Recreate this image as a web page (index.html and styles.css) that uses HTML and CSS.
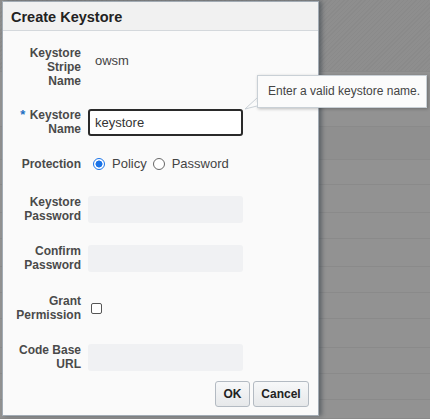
FILE: index.html
```html
<!DOCTYPE html>
<html>
<head>
<meta charset="utf-8">
<link rel="stylesheet" href="styles.css">
</head>
<body>
<div class="backdrop">
  <div class="bg-row hatch" style="height:72px"></div>
  <div class="bg-row" style="height:55px"></div>
  <div class="bg-row dotted" style="height:33px"></div>
  <div class="bg-row" style="height:25px"></div>
  <div class="bg-row" style="height:28px"></div>
  <div class="bg-row" style="height:26px"></div>
  <div class="bg-row" style="height:28px"></div>
  <div class="bg-row" style="height:26px"></div>
  <div class="bg-row" style="height:26px"></div>
  <div class="bg-row" style="height:29px"></div>
  <div class="bg-row" style="height:26px"></div>
  <div class="bg-row" style="height:26px"></div>
  <div class="bg-row" style="height:19px"></div>
</div>

<div class="dialog">
  <div class="dlg-header">Create Keystore</div>
  <div class="dlg-body">
    <div class="row r1">
      <div class="label">Keystore<br>Stripe<br>Name</div>
      <div class="value">owsm</div>
    </div>
    <div class="row r2 center">
      <div class="label"><span class="req">*</span> Keystore<br>Name</div>
      <div class="input active">keystore</div>
    </div>
    <div class="row r3 center">
      <div class="label">Protection</div>
      <div class="radios">
        <span class="radio on"></span><span class="rlabel">Policy</span>
        <span class="radio"></span><span class="rlabel">Password</span>
      </div>
    </div>
    <div class="row r4 center">
      <div class="label">Keystore<br>Password</div>
      <div class="input disabled"></div>
    </div>
    <div class="row r5 center">
      <div class="label">Confirm<br>Password</div>
      <div class="input disabled"></div>
    </div>
    <div class="row r6 center">
      <div class="label">Grant<br>Permission</div>
      <div class="check-wrap"><span class="checkbox"></span></div>
    </div>
    <div class="row r7 center">
      <div class="label">Code Base<br>URL</div>
      <div class="input disabled"></div>
    </div>
    <div class="buttons">
      <button class="btn ok">OK</button>
      <button class="btn cancel">Cancel</button>
    </div>
  </div>
</div>

<div class="tooltip">
  <svg class="tail" width="16" height="14" viewBox="0 0 16 14">
    <path d="M13 0 L13 6 L1 13 L13 10 Z" fill="#fbfbfb"/>
    <path d="M13 2 L1 13 L13 10" fill="none" stroke="#c9d0d6" stroke-width="1"/>
  </svg>
  Enter a valid keystore name.
</div>
</body>
</html>
```

FILE: styles.css
```css
* { box-sizing: border-box; }
html, body {
  margin: 0;
  padding: 0;
  width: 430px;
  height: 419px;
  overflow: hidden;
  background: #8f8f8f;
  font-family: "Liberation Sans", Arial, sans-serif;
}
.backdrop {
  display: flex;
  flex-direction: column;
  width: 430px;
  height: 419px;
}
.bg-row {
  background: #929292;
  border-bottom: 1px solid #8a8a8a;
  flex: none;
}
.bg-row.hatch {
  background: repeating-linear-gradient(135deg, #8a8a8a 0 1px, #8e8e8e 1px 3px);
}
.bg-row.dotted {
  background: #8f8f8f;
}
.dialog {
  position: absolute;
  left: 2px;
  top: 1px;
  width: 317px;
  height: 415px;
  background: #fafafa;
  border: 1px solid #a2abb4;
  box-shadow: 3px 0 4px rgba(40, 50, 60, 0.45);
  display: flex;
  flex-direction: column;
}
.dlg-header {
  height: 29px;
  background: #f1f1f1;
  border-bottom: 1px solid #d4d8dc;
  font-size: 14.5px;
  font-weight: bold;
  color: #222;
  padding: 7px 0 0 8px;
  flex: none;
}
.dlg-body {
  padding-top: 15px;
  display: flex;
  flex-direction: column;
}
.row {
  display: grid;
  grid-template-columns: 78px 1fr;
  column-gap: 7px;
  align-items: start;
}
.row.center { align-items: center; }
.label {
  text-align: right;
  font-size: 12px;
  font-weight: bold;
  line-height: 14px;
  color: #4a4a4a;
}
.req {
  color: #1d6fc2;
  font-size: 13px;
  margin-right: 1px;
}
.value {
  font-size: 13px;
  color: #444;
  line-height: 14px;
  padding: 8px 0 0 7px;
}
.r2 { margin-top: 20px; }
.r3 { margin-top: 20px; }
.r4 { margin-top: 24px; }
.r5 { margin-top: 21px; }
.r6 { margin-top: 22px; }
.r7 { margin-top: 21px; }
.input {
  width: 155px;
  height: 27px;
  border-radius: 3px;
  font-size: 13px;
  color: #333;
  line-height: 23px;
  padding-left: 5px;
}
.input.active {
  background: #fff;
  border: 2px solid #2a2a2a;
}
.input.disabled {
  background: #f0f1f3;
}
.radios {
  display: flex;
  align-items: center;
  padding-left: 5px;
  height: 15px;
}
.radio {
  width: 12px;
  height: 12px;
  border-radius: 50%;
  border: 1px solid #666;
  background: #fff;
  flex: none;
}
.radio.on {
  border: 1.5px solid #1a73e8;
  background: radial-gradient(circle, #1a73e8 0 3.2px, #fff 3.8px);
}
.rlabel {
  font-size: 13px;
  color: #444;
  margin-left: 7px;
  margin-right: 6px;
}
.check-wrap {
  padding-left: 3px;
  display: flex;
  align-items: center;
}
.checkbox {
  width: 11px;
  height: 11px;
  border: 1px solid #555;
  border-radius: 2px;
  background: #fff;
}
.buttons {
  margin-top: 10px;
  display: flex;
  justify-content: flex-end;
  gap: 3px;
  padding-right: 9px;
}
.btn {
  height: 26px;
  font-family: "Liberation Sans", Arial, sans-serif;
  font-size: 12px;
  font-weight: bold;
  color: #222;
  background: linear-gradient(#f7f8f9, #e6e8ea);
  border: 1px solid #b3bac2;
  border-radius: 3px;
  padding: 0;
}
.btn.ok { width: 35px; }
.btn.cancel { width: 56px; }
.tooltip {
  position: absolute;
  left: 257px;
  top: 75px;
  width: 170px;
  height: 33px;
  background: #fbfbfb;
  border: 1px solid #c9d0d6;
  box-shadow: 1px 1px 3px rgba(0, 0, 0, 0.25);
  font-size: 12px;
  color: #444;
  padding: 8px 0 0 10px;
  white-space: nowrap;
}
.tail {
  position: absolute;
  left: -14px;
  top: 20px;
}
```
